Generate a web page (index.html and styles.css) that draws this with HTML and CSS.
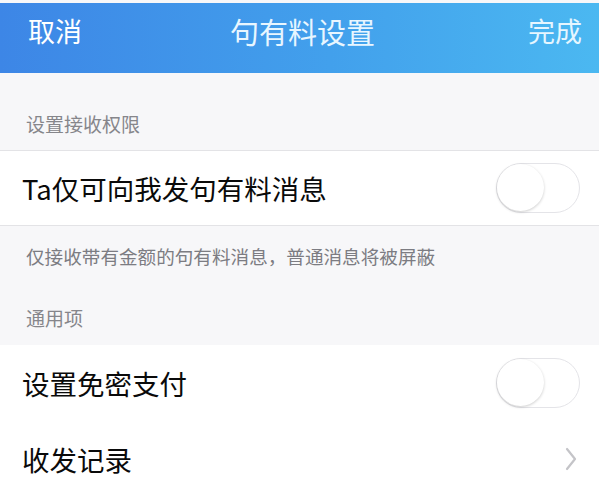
FILE: index.html
```html
<!DOCTYPE html>
<html lang="zh-CN">
<head>
  <meta charset="UTF-8">
  <meta name="viewport" content="width=device-width, initial-scale=1">
  <title>句有料设置</title>
  <link rel="stylesheet" href="styles.css">
</head>
<body>
  <div class="page">
    <div class="navbar">
      <span class="nav-btn">取消</span>
      <span class="nav-title">句有料设置</span>
      <span class="nav-btn done">完成</span>
    </div>

    <div class="section-label first">设置接收权限</div>
    <div class="cell bordered">
      <span class="cell-text">Ta仅可向我发句有料消息</span>
      <span class="switch"><span class="knob"></span></span>
    </div>
    <div class="note">仅接收带有金额的句有料消息，普通消息将被屏蔽</div>

    <div class="section-label second">通用项</div>
    <div class="cell">
      <span class="cell-text">设置免密支付</span>
      <span class="switch"><span class="knob"></span></span>
    </div>
    <div class="cell">
      <span class="cell-text">收发记录</span>
      <svg class="chevron" width="14" height="24" viewBox="0 0 14 24">
        <path d="M3 2 L11 12 L3 22" fill="none" stroke="#c4c4c8" stroke-width="2.2" stroke-linecap="round" stroke-linejoin="round"/>
      </svg>
    </div>
  </div>
</body>
</html>
```

FILE: styles.css
```css
body {
  margin: 0;
  font-family: "Noto Sans CJK SC", "Noto Sans", sans-serif;
  background: #f7f7f9;
}

.page {
  width: 599px;
  height: 495px;
  overflow: hidden;
  padding-top: 3px;
  box-sizing: border-box;
  background: #f7f7f9;
}

.navbar {
  height: 70px;
  background: linear-gradient(90deg, #3d86e6 0%, #42a0ec 55%, #4bb8f1 100%);
  display: flex;
  align-items: center;
  justify-content: space-between;
  padding: 0 17px 14px 28px;
  box-sizing: border-box;
  color: #fff;
}

.nav-btn {
  font-size: 27px;
  line-height: 30px;
  width: 80px;
}

.nav-btn.done {
  text-align: right;
  color: #e6f6ff;
}

.nav-title {
  font-size: 29px;
  line-height: 30px;
  color: #e8f6ff;
  margin-left: -5px;
}

.section-label {
  font-size: 19px;
  line-height: 28px;
  color: #86868b;
  padding-left: 26px;
}

.section-label.first {
  padding-top: 37px;
  padding-bottom: 12px;
}

.section-label.second {
  padding-top: 34px;
  padding-bottom: 13px;
}

.cell {
  height: 76px;
  background: #fff;
  display: flex;
  align-items: center;
  justify-content: space-between;
  padding: 0 19px 0 22px;
  box-sizing: border-box;
}

.cell.bordered {
  border-top: 1px solid #e3e3e6;
  border-bottom: 1px solid #e3e3e6;
}

.cell-text {
  font-size: 27.5px;
  color: #0a0a0a;
}

.note {
  font-size: 18.6px;
  line-height: 28px;
  color: #7c7c82;
  padding: 16px 0 0 26px;
}

.switch {
  position: relative;
  width: 84px;
  height: 50px;
  border-radius: 25px;
  border: 1.5px solid #e4e4e8;
  background: #fff;
  box-sizing: border-box;
}

.knob {
  position: absolute;
  left: 0;
  top: 0;
  width: 47px;
  height: 47px;
  border-radius: 50%;
  background: #fff;
  box-shadow: 0 1px 3px rgba(0, 0, 0, 0.2);
}

.chevron {
  margin-right: 2px;
}
```
